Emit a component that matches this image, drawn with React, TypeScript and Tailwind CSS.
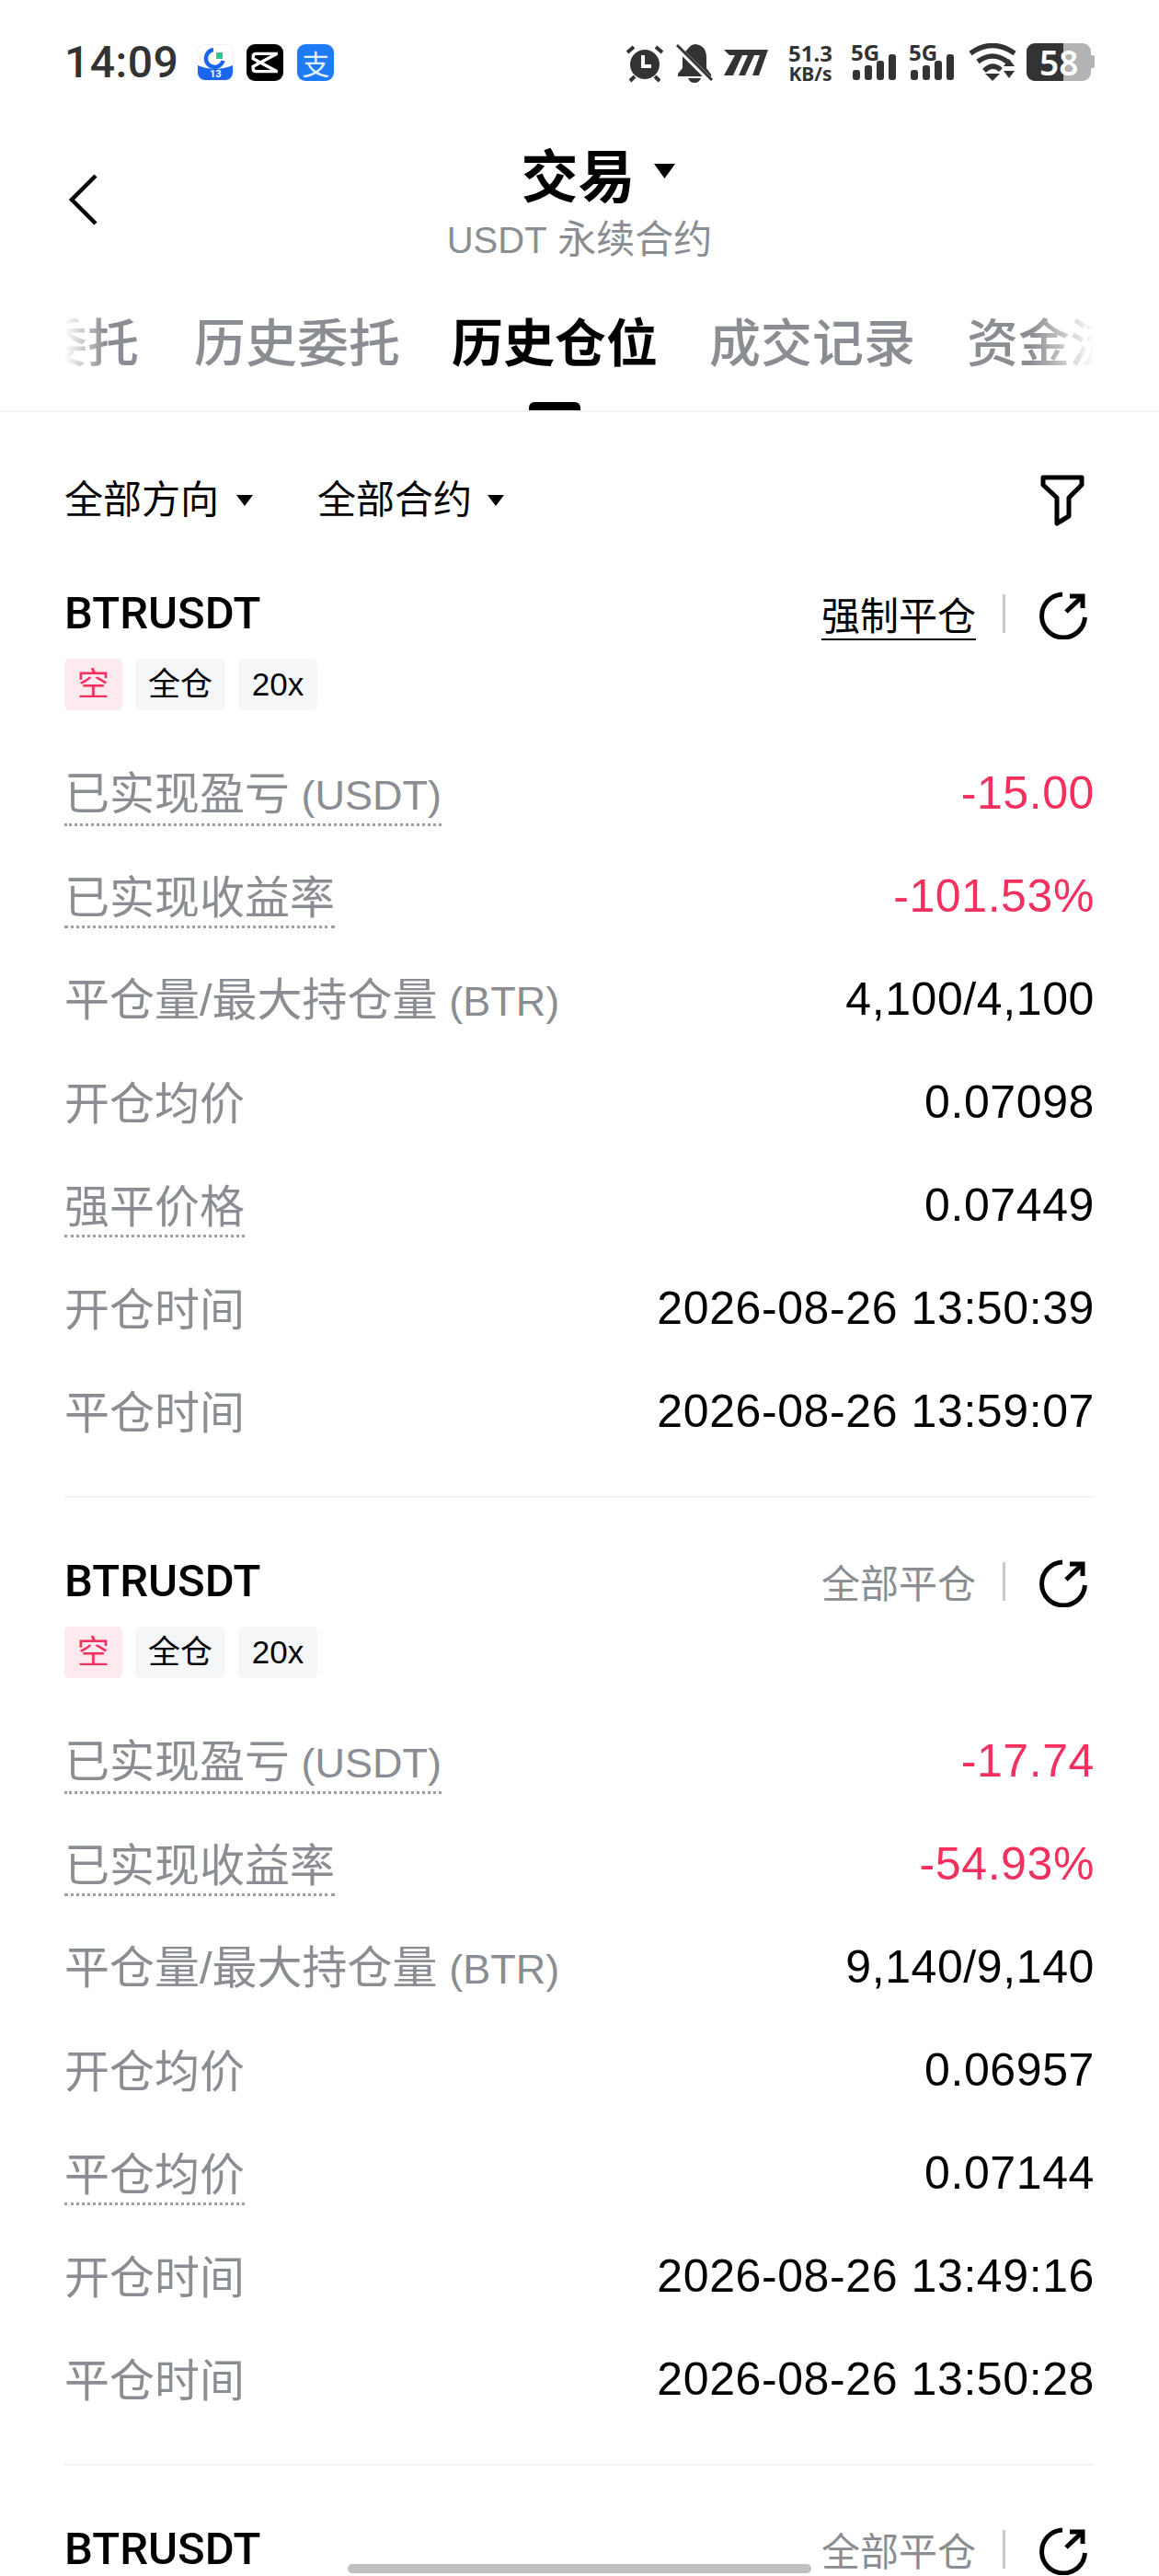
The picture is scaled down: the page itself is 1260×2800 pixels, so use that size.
import React from "react";

const SANS = "font-['Liberation_Sans','Noto_Sans_CJK_SC',sans-serif]";

type Row = { label: string; unit?: string; value: string; dotted?: boolean; red?: boolean };

const firstRows: Row[] = [
  { label: "已实现盈亏", unit: "(USDT)", value: "-15.00", dotted: true, red: true },
  { label: "已实现收益率", value: "-101.53%", dotted: true, red: true },
  { label: "平仓量/最大持仓量", unit: "(BTR)", value: "4,100/4,100" },
  { label: "开仓均价", value: "0.07098" },
  { label: "强平价格", value: "0.07449", dotted: true },
  { label: "开仓时间", value: "2026-08-26 13:50:39" },
  { label: "平仓时间", value: "2026-08-26 13:59:07" },
];

const secondRows: Row[] = [
  { label: "已实现盈亏", unit: "(USDT)", value: "-17.74", dotted: true, red: true },
  { label: "已实现收益率", value: "-54.93%", dotted: true, red: true },
  { label: "平仓量/最大持仓量", unit: "(BTR)", value: "9,140/9,140" },
  { label: "开仓均价", value: "0.06957" },
  { label: "平仓均价", value: "0.07144", dotted: true },
  { label: "开仓时间", value: "2026-08-26 13:49:16" },
  { label: "平仓时间", value: "2026-08-26 13:50:28" },
];

function SignalBars() {
  return (
    <div className="flex flex-col items-start">
      <span className="font-['Noto_Sans',sans-serif] font-bold text-[24px] leading-[20px] text-[#333] -ml-[2px]">5G</span>
      <div className="flex items-end gap-[5px] h-[28px] -mt-[8px]">
        <span className="w-[8px] h-[11px] rounded-[3px] bg-[#333]" />
        <span className="w-[8px] h-[16px] rounded-[3px] bg-[#333]" />
        <span className="w-[8px] h-[21px] rounded-[3px] bg-[#333]" />
        <span className="w-[8px] h-[28px] rounded-[3px] bg-[#333]" />
      </div>
    </div>
  );
}

function StatusBar() {
  return (
    <div className="h-[160px] px-[70px] pt-[47px] flex items-start justify-between">
      <div className="flex items-center h-[41px]">
        <span className="font-['Roboto',sans-serif] font-medium text-[48px] leading-[41px] text-[#333] tracking-[0.5px]">14:09</span>
        {/* notification app icons */}
        <div className="relative ml-[20px] w-[40px] h-[40px] rounded-[9px] border border-[#eef0f3] bg-white overflow-hidden">
          <svg viewBox="0 0 38 38" className="w-[38px] h-[38px]">
            <path d="M0 22 Q19 30 38 22 V38 H0Z" fill="#1a66f0" />
            <path d="M17 5 A9.5 9.5 0 1 0 27.5 17" fill="none" stroke="#1a66f0" strokeWidth="4.5" />
            <rect x="20" y="8" width="7" height="7" fill="#2bc78b" />
          </svg>
          <span className="absolute left-0 right-0 bottom-0 text-center font-['Roboto',sans-serif] font-bold text-[11px] leading-[13px] text-white">13</span>
        </div>
        <div className="ml-[14px] w-[40px] h-[40px] rounded-[9px] bg-black flex items-center justify-center">
          <svg viewBox="0 0 30 26" className="w-[32px] h-[28px]">
            <path d="M28 4 H6 Q3 4 3 7 V9 L27 22 M28 22 H6 Q3 22 3 19 V17 L27 4" fill="none" stroke="#fff" strokeWidth="3.2" />
          </svg>
        </div>
        <div className="ml-[15px] w-[40px] h-[40px] rounded-[9px] bg-[#1d7bf5] flex items-center justify-center">
          <span className="font-['Noto_Sans_CJK_SC',sans-serif] text-[30px] leading-[40px] text-[#e4efff]">支</span>
        </div>
      </div>

      <div className="flex items-start">
        {/* alarm */}
        <svg viewBox="0 0 44 44" className="w-[44px] h-[44px]">
          <circle cx="22" cy="23" r="16" fill="#333" />
          <path d="M3 10 L10 4 M41 10 L34 4 M11 36 L6 41 M33 36 L38 41" stroke="#333" strokeWidth="4" />
          <path d="M20 13 V25 H29" fill="none" stroke="#fff" strokeWidth="4" />
        </svg>
        {/* muted bell */}
        <svg viewBox="0 0 40 44" className="w-[40px] h-[44px] ml-[12px]">
          <path d="M12 7 Q16 1 21 1 Q33 2 33 16 V27 L38 34 V36 H2 V33 L7 27 V12Z" fill="#333" />
          <path d="M13 38 H27 Q25 43 20 43 Q15 43 13 38Z" fill="#333" />
          <path d="M1 4 L38 41" stroke="#fff" strokeWidth="6" />
          <path d="M1 2 L39 40" stroke="#333" strokeWidth="3" />
        </svg>
        <svg viewBox="0 0 48 28" className="w-[48px] h-[28px] ml-[12px] mt-[7px]">
          <path d="M0 0 H48 L38 28 H31 L39 6 H33 L23 28 H16 L26 6 H20 L10 28 H0 L12 6 H6Z" fill="#333" />
        </svg>
        {/* network speed */}
        <div className="ml-[21px] w-[50px] flex flex-col items-center font-['Noto_Sans',sans-serif] font-bold text-[#333] -mt-[1px]">
          <span className="text-[24px] leading-[24px]">51.3</span>
          <span className="text-[21px] leading-[20px] whitespace-nowrap">KB/s</span>
        </div>
        <div className="ml-[21px]"><SignalBars /></div>
        <div className="ml-[16px]"><SignalBars /></div>
        <svg viewBox="0 0 52 42" className="w-[52px] h-[42px] ml-[16px]">
          <path d="M2 11 Q26 -6 50 11" fill="none" stroke="#333" strokeWidth="5.5" />
          <path d="M10 20 Q26 8 42 20" fill="none" stroke="#333" strokeWidth="5.5" />
          <path d="M17 30 Q26 21 35 29" fill="none" stroke="#333" strokeWidth="5.5" />
          <path d="M18 33 H34 L26 41Z" fill="#333" />
          <path d="M38 25 L44 17 L50 25Z M38 30 H50 L44 38Z" fill="#333" />
        </svg>
        {/* battery, 58 percent filled */}
        <div className="relative ml-[11px] w-[70px] h-[41px] rounded-[9px] bg-[#b3b3b3] overflow-hidden">
          <div className="absolute left-0 top-0 bottom-0 w-[40px] bg-[#333]" />
          <span className="absolute left-[14px] top-0 font-['Noto_Sans',sans-serif] font-semibold text-[37px] leading-[41px] text-white">58</span>
        </div>
        <div className="w-[4px] h-[14px] mt-[13px] rounded-r-[2px] bg-[#b3b3b3]" />
      </div>
    </div>
  );
}

function NavBar() {
  return (
    <div className="relative h-[122px] px-[70px] flex items-center">
      <svg viewBox="0 0 32 56" className="w-[32px] h-[56px] ml-[4px] -mt-[8px]" fill="none" stroke="#000" strokeWidth="4.5">
        <path d="M30 2 L4 28 L30 54" />
      </svg>
      <div className="absolute left-0 right-0 top-[3px] flex flex-col items-center">
        <div className="flex items-center h-[62px] ml-[40px]">
          <span className={`${SANS} font-bold text-[62px] leading-[62px] text-black`}>交易</span>
          <svg viewBox="0 0 23 16" className="w-[23px] h-[16px] ml-[20px] -mt-[17px]">
            <path d="M0 0 H23 L11.5 16Z" fill="#000" />
          </svg>
        </div>
        <span className={`${SANS} text-[42px] leading-[46px] mt-[13px] text-[#8a8d91]`}>
          <span className="text-[40px]">USDT</span> 永续合约
        </span>
      </div>
    </div>
  );
}

function TabBar() {
  return (
    <div className="mt-[59px] h-[107px] border-b-2 border-[#f3f3f3]">
      <div className="relative mx-[70px] h-[105px] overflow-hidden">
        <div className={`${SANS} flex gap-[56px] -ml-[31px] text-[56px] leading-[66px] font-medium whitespace-nowrap text-[#8a8d91]`}>
          <span className="mr-[4px]">委托</span>
          <span>历史委托</span>
          <span className="relative h-[105px] font-bold text-black">
            历史仓位
            <span className="absolute left-[84px] bottom-0 w-[56px] h-[9px] rounded-t-[6px] bg-black" />
          </span>
          <span>成交记录</span>
          <span>资金流水</span>
        </div>
        {/* edge fades on the scroller */}
        <div className="absolute left-0 top-0 w-[44px] h-[70px] bg-gradient-to-r from-white to-transparent" />
        <div className="absolute right-0 top-0 w-[70px] h-[70px] bg-gradient-to-l from-white to-transparent" />
      </div>
    </div>
  );
}

function FilterBar() {
  return (
    <div className={`${SANS} mt-[66px] h-[60px] px-[70px] flex items-center text-[42px] leading-[60px] text-black`}>
      <span>全部方向</span>
      <svg viewBox="0 0 18 12" className="w-[18px] h-[12px] ml-[19px]"><path d="M0 0 H18 L9 12Z" fill="#000" /></svg>
      <span className="ml-[70px]">全部合约</span>
      <svg viewBox="0 0 18 12" className="w-[18px] h-[12px] ml-[17px]"><path d="M0 0 H18 L9 12Z" fill="#000" /></svg>
      <svg viewBox="0 0 48 56" className="w-[48px] h-[56px] ml-auto mr-[11px]" fill="none" stroke="#000" strokeWidth="5" strokeLinejoin="round">
        <path d="M3 3 H45 V11 L31 25 V45 L18 53 V25 L3 11Z" />
      </svg>
    </div>
  );
}

function ShareIcon() {
  return (
    <svg viewBox="0 0 52 52" className="w-[52px] h-[52px] ml-[37px] mr-[8px] mt-[4px]" fill="none" stroke="#000" strokeWidth="5">
      <path d="M25 3 A23.5 23.5 0 1 0 49.5 28" />
      <path d="M29 22 L47 5" />
      <path d="M33 5 H47 V18" />
    </svg>
  );
}

function PositionCard({ action, forced, rows }: { action: string; forced?: boolean; rows?: Row[] }) {
  return (
    <div className="px-[70px]">
      <div className="flex items-center justify-between h-[60px] pt-[4px]">
        <span className="font-['Roboto',sans-serif] font-medium text-[49px] leading-[56px] text-black">BTRUSDT</span>
        <div className="flex items-center">
          <span className={`${SANS} text-[42px] leading-[46px] pt-[10px] ${forced ? "text-black border-b-2 border-black" : "text-[#8a8d91] border-b-2 border-transparent"}`}>{action}</span>
          <span className="ml-[29px] w-[3px] h-[42px] bg-[#c8cacc]" />
          <ShareIcon />
        </div>
      </div>
      {rows && (
        <>
          <div className={`${SANS} mt-[21px] flex gap-[14px] text-[35px] leading-[56px]`}>
            <span className="w-[63px] text-center rounded-[6px] bg-[#fdeaef] text-[#f5305f]">空</span>
            <span className="w-[98px] text-center rounded-[6px] bg-[#f5f6f7] text-black">全仓</span>
            <span className="w-[86px] text-center rounded-[6px] bg-[#f5f6f7] text-black">20x</span>
          </div>
          <div className="mt-[34px] flex flex-col">
            {rows.map((row) => (
              <div key={row.label} className={`${SANS} h-[112px] flex items-center justify-between text-[49px] leading-[56px]`}>
                <span className={`mt-[8px] pb-[2px] border-b-[3px] text-[#8a8d91] ${row.dotted ? "border-dotted border-[#9a9da1]" : "border-transparent"}`}>
                  {row.label}
                  {row.unit && <span className="text-[45px]"> {row.unit}</span>}
                </span>
                <span className={`text-[50px] tracking-[0.6px] ${row.red ? "text-[#f5305f]" : "text-black"}`}>{row.value}</span>
              </div>
            ))}
          </div>
          <div className="mt-[36px] h-[2px] bg-[#f3f3f3]" />
        </>
      )}
    </div>
  );
}

export default function App() {
  return (
    <div className="relative w-[1260px] h-[2800px] overflow-hidden bg-white">
      <StatusBar />
      <NavBar />
      <TabBar />
      <FilterBar />
      <div className="mt-[61px] flex flex-col gap-[59px]">
        <PositionCard action="强制平仓" forced rows={firstRows} />
        <PositionCard action="全部平仓" rows={secondRows} />
        <PositionCard action="全部平仓" />
      </div>
      {/* gesture bar */}
      <div className="absolute left-[378px] bottom-[3px] w-[504px] h-[10px] rounded-full bg-[#c0c0c0]" />
    </div>
  );
}
